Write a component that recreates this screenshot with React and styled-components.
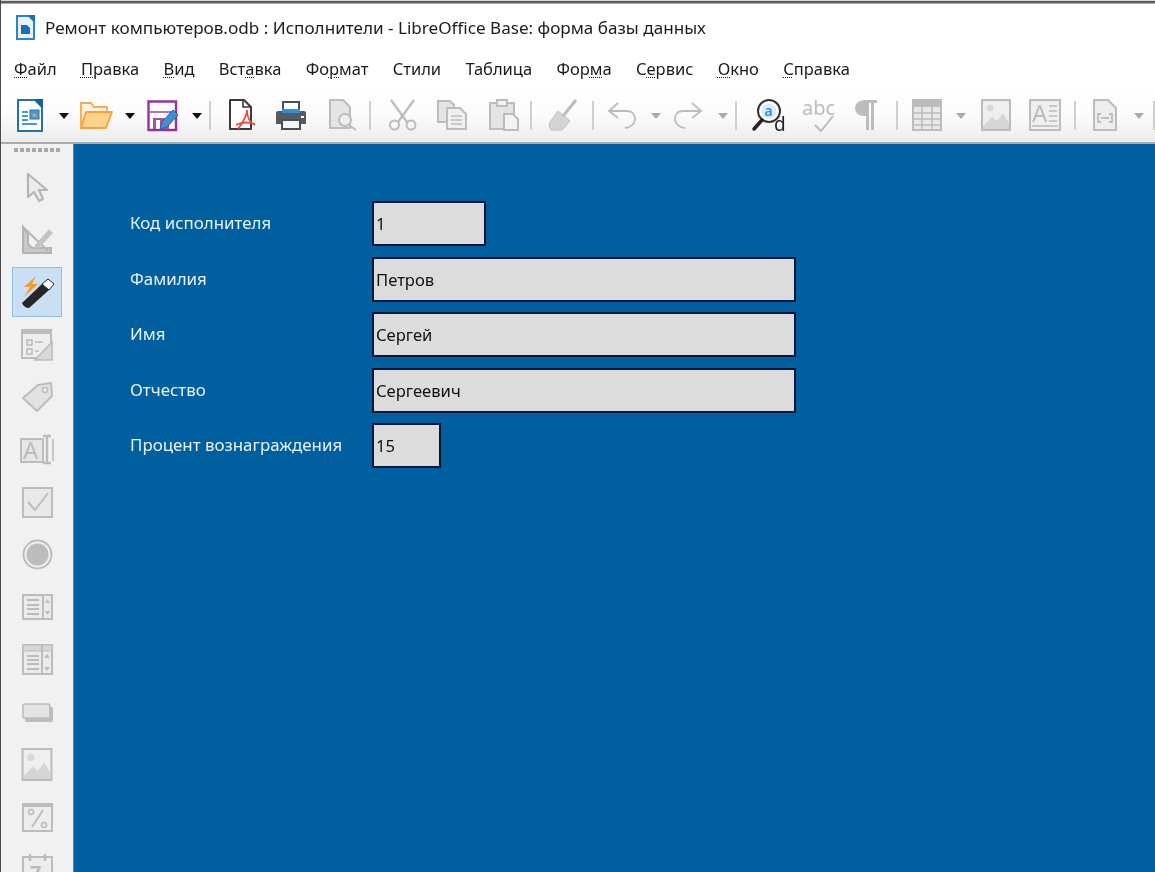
import React from "react";
import styled, { createGlobalStyle } from "styled-components";

const GlobalStyle = createGlobalStyle`
  html, body {
    margin: 0;
    padding: 0;
    background: #fff;
  }
  body {
    font-family: "Noto Sans", "Open Sans", sans-serif;
    color: #111;
  }
`;

// disabled icon colours
const GS = "#bcbcbc";
const GF = "#e4e4e4";

const Window = styled.div`
  width: 1155px;
  height: 872px;
  box-sizing: border-box;
  border-left: 1px solid #4a4a4a;
  display: flex;
  flex-direction: column;
  overflow: hidden;
  background: #fff;
  filter: blur(0.35px);
`;

const TopEdge = styled.div`
  height: 4px;
  flex: none;
  margin-left: -1px;
  background: linear-gradient(#d8d8d8 0, #d8d8d8 1px, #5c5c5c 1px, #5c5c5c 3px, #fff 4px);
`;

const TitleBar = styled.div`
  height: 46px;
  flex: none;
  display: flex;
  align-items: center;
  gap: 10px;
  padding-left: 15px;
  font-size: 17.1px;
  color: #1c1c1c;
  white-space: nowrap;
`;

const MenuBar = styled.div`
  height: 38px;
  flex: none;
  box-sizing: border-box;
  padding: 0 0 2px 13px;
  display: flex;
  align-items: center;
  gap: 24.3px;
  font-size: 16.5px;
  color: #1a1a1a;
  white-space: nowrap;
`;

const MenuItem = styled.span`
  display: block;
`;

const Key = styled.span`
  text-decoration: underline dotted 1px;
  text-underline-offset: 2px;
`;

const Toolbar = styled.div`
  height: 54px;
  flex: none;
  display: flex;
  align-items: center;
  background: linear-gradient(#ffffff 0%, #fbfbfb 50%, #ececec 100%);
  border-bottom: 2px solid #ababab;
  overflow: hidden;
`;

const Slot = styled.div`
  flex: none;
  margin-left: ${(p) => p.$ml}px;
  display: flex;
  align-items: center;
  svg {
    display: block;
    overflow: visible;
  }
`;

const Sep = styled.div`
  flex: none;
  width: 2px;
  height: 29px;
  margin-left: ${(p) => p.$ml}px;
  background: #cfcfcf;
`;

const Caret = styled.div`
  flex: none;
  width: 0;
  height: 0;
  margin-left: ${(p) => p.$ml}px;
  margin-top: 2px;
  border-left: ${(p) => (p.$off ? 5 : 5.5)}px solid transparent;
  border-right: ${(p) => (p.$off ? 5 : 5.5)}px solid transparent;
  border-top: 6px solid ${(p) => (p.$off ? "#aaa" : "#111")};
`;

const Main = styled.div`
  flex: 1;
  min-height: 0;
  display: flex;
`;

const Sidebar = styled.div`
  width: 72px;
  flex: none;
  background: #f1f1f1;
  display: flex;
  flex-direction: column;
  align-items: center;
  overflow: hidden;
`;

const Grip = styled.div`
  width: 47px;
  height: 4px;
  flex: none;
  margin: 4px 0 9px;
  background: repeating-linear-gradient(90deg, #a9a9a9 0, #a9a9a9 4px, transparent 4px, transparent 6px);
`;

const SideCell = styled.div`
  width: 100%;
  height: 52.5px;
  flex: none;
  display: flex;
  align-items: center;
  justify-content: center;
  svg {
    display: block;
    overflow: visible;
  }
`;

const ActiveCell = styled.div`
  width: 50px;
  height: 50px;
  box-sizing: border-box;
  background: #c9dff4;
  border: 1px solid #8fbfe8;
  display: flex;
  align-items: center;
  justify-content: center;
`;

const Canvas = styled.div`
  flex: 1;
  background: #00609f;
  border-left: 1px solid #2f93cf;
  padding: 57px 0 0 56px;
`;

const Form = styled.div`
  display: grid;
  grid-template-columns: 242px auto;
  grid-auto-rows: 45px;
  row-gap: 10.5px;
  align-items: center;
  justify-items: start;
`;

const Label = styled.div`
  font-size: 16.9px;
  padding-bottom: 2px;
  color: #e9f1f7;
  white-space: nowrap;
`;

const Field = styled.div`
  width: ${(p) => p.$w}px;
  height: 45px;
  box-sizing: border-box;
  background: #dcdcdc;
  border: 2px solid #06173a;
  padding-left: 2px;
  display: flex;
  align-items: center;
  font-size: 16.6px;
  color: #111;
`;

const BaseDocIcon = () => (
  <svg width="19" height="25" viewBox="0 0 19 25">
    <path d="M1 1H13L18 6V24H1Z" fill="#e8f2fa" stroke="#2b86c5" strokeWidth="2" />
    <path d="M12 0H19V7Z" fill="#1c6fb0" />
    <path d="M5 10H11L14 13V19H5Z" fill="#1670b8" />
  </svg>
);

const WriterIcon = () => (
  <svg width="26" height="33" viewBox="0 0 26 33">
    <path d="M1 1H18L25 8V32H1Z" fill="#fff" stroke="#2173b0" strokeWidth="2" />
    <path d="M17 0H26V9Z" fill="#1a5f99" />
    <path d="M5 13H11M5 17H11M5 21H11M5 25H20" stroke="#2173b0" strokeWidth="1.6" />
    <rect x="13" y="11" width="9" height="9" fill="#4a9ad2" stroke="#2173b0" />
    <path d="M15 17L17 14L20 18Z" fill="#f0a24a" />
  </svg>
);

const FolderIcon = () => (
  <svg width="34" height="30" viewBox="0 0 34 30">
    <path d="M2 27V3H12L15 7H28V12" fill="#fff3df" stroke="#f5a94c" strokeWidth="1.8" />
    <path d="M7 12H33L27 28H2Z" fill="#fdd28a" stroke="#f5a13c" strokeWidth="1.8" strokeLinejoin="round" />
  </svg>
);

const SaveIcon = () => (
  <svg width="31" height="31" viewBox="0 0 31 31">
    <path d="M1.5 1.5H29V30H1.5Z" fill="#fff" stroke="#98309c" strokeWidth="2.4" />
    <path d="M3 12H28" stroke="#98309c" strokeWidth="1.4" />
    <rect x="6" y="18" width="16" height="11" fill="#a551a8" />
    <rect x="9" y="20" width="4" height="9" fill="#fff" />
    <path d="M13 29L15 22L26 10L31 15L20 27Z" fill="#3d8fd0" stroke="#1d68a8" />
  </svg>
);

const PdfIcon = () => (
  <svg width="28" height="32" viewBox="0 0 28 32">
    <path d="M2 1H16L23 8V30H2Z" fill="#fff" stroke="#3a3a3a" strokeWidth="2" strokeLinejoin="round" />
    <path d="M15 1V8H23" fill="none" stroke="#3a3a3a" strokeWidth="1.6" />
    <path d="M19 11C19 17 13 26 10 30M19 11C19 18 22 24 27 26M8 26C14 23 21 23 27 25" fill="none" stroke="#ea4a3c" strokeWidth="1.8" />
  </svg>
);

const PrinterIcon = () => (
  <svg width="32" height="29" viewBox="0 0 32 29">
    <rect x="8" y="1" width="16" height="11" fill="#fff" stroke="#4a4f55" strokeWidth="2" />
    <path d="M1 12Q1 10 3 10H29Q31 10 31 12V23H1Z" fill="#565b62" />
    <path d="M7 8H25V12H7Z" fill="#2f8fd8" />
    <rect x="7" y="19" width="18" height="9" fill="#f4f4f4" stroke="#4a4f55" strokeWidth="2" />
    <rect x="26" y="15" width="3" height="2" fill="#fff" />
  </svg>
);

const PreviewIcon = () => (
  <svg width="30" height="32" viewBox="0 0 30 32">
    <path d="M2 1H15L22 8V29H2Z" fill={GF} stroke={GS} strokeWidth="2" />
    <circle cx="17" cy="21" r="6" fill="#efefef" stroke={GS} strokeWidth="2" />
    <path d="M21 26L28 31" stroke={GS} strokeWidth="2" />
  </svg>
);

const ScissorsIcon = () => (
  <svg width="30" height="32" viewBox="0 0 30 32">
    <path d="M3 1L19 23M26 1L10 23" stroke={GS} strokeWidth="2.2" fill="none" />
    <circle cx="6.5" cy="26" r="4.5" fill="none" stroke={GS} strokeWidth="2" />
    <circle cx="23" cy="26" r="4.5" fill="none" stroke={GS} strokeWidth="2" />
  </svg>
);

const CopyIcon = () => (
  <svg width="30" height="30" viewBox="0 0 30 30">
    <path d="M1 1H13L17 5V22H1Z" fill={GF} stroke={GS} strokeWidth="2" />
    <path d="M10 8H23L29 14V29H10Z" fill="#f0f0f0" stroke={GS} strokeWidth="2" />
    <path d="M14 16H25M14 20H25M14 24H25" stroke={GS} strokeWidth="1.6" />
  </svg>
);

const PasteIcon = () => (
  <svg width="30" height="32" viewBox="0 0 30 32">
    <rect x="1" y="4" width="24" height="26" fill={GF} stroke={GS} strokeWidth="2" />
    <rect x="8" y="1" width="10" height="6" fill="#f3f3f3" stroke={GS} strokeWidth="2" />
    <path d="M15 15H24L29 20V31H15Z" fill="#f3f3f3" stroke={GS} strokeWidth="2" />
  </svg>
);

const BrushIcon = () => (
  <svg width="30" height="32" viewBox="0 0 30 32">
    <path d="M28 1L15 17" stroke={GS} strokeWidth="3" />
    <path d="M10 12L22 22L14 31H3Q0 28 2 23Z" fill="#d4d4d4" stroke={GS} />
  </svg>
);

const UndoIcon = () => (
  <svg width="32" height="28" viewBox="0 0 32 28">
    <path d="M11 2L2 10L11 17M2 10H20C31 10 31 26 18 27" fill="none" stroke={GS} strokeWidth="1.8" />
  </svg>
);

const RedoIcon = () => (
  <svg width="32" height="28" viewBox="0 0 32 28">
    <path d="M21 2L30 10L21 17M30 10H12C1 10 1 26 14 27" fill="none" stroke={GS} strokeWidth="1.8" />
  </svg>
);

const IconText = styled.text`
  font-family: "Noto Sans", sans-serif;
`;

const FindIcon = () => (
  <svg width="36" height="34" viewBox="0 0 36 34">
    <circle cx="17" cy="13" r="11" fill="#fff" stroke="#333" strokeWidth="2" />
    <circle cx="17" cy="13" r="7.5" fill="#d8ecfa" />
    <IconText x="12.5" y="18" fontSize="14" fontWeight="600" fill="#2f93d6">a</IconText>
    <path d="M10 22L2 31" stroke="#222" strokeWidth="3.5" strokeLinecap="round" />
    <IconText x="22" y="33" fontSize="19" fill="#222">d</IconText>
  </svg>
);

const AbcIcon = () => (
  <svg width="34" height="34" viewBox="0 0 34 34">
    <IconText x="0" y="17" fontSize="20" fill={GS}>abc</IconText>
    <path d="M13 27L19 33L31 18" fill="none" stroke={GS} strokeWidth="2" />
  </svg>
);

const PilcrowIcon = () => (
  <svg width="24" height="32" viewBox="0 0 24 32">
    <path d="M11 1H23V4H20V31H17V4H15V31H12V17H10C-2 17 -2 1 11 1Z" fill={GS} />
  </svg>
);

const TableIcon = () => (
  <svg width="30" height="32" viewBox="0 0 30 32">
    <rect x="1" y="1" width="28" height="30" fill="#e9e9e9" stroke={GS} strokeWidth="2" />
    <rect x="1" y="1" width="28" height="7" fill={GS} />
    <path d="M1 14H29M1 20H29M1 26H29M10 8V31M20 8V31" stroke={GS} strokeWidth="1.6" />
  </svg>
);

const ImageIcon = ({ w = 30, h = 32 }) => (
  <svg width={w} height={h} viewBox="0 0 30 32">
    <rect x="1" y="1" width="28" height="30" fill="#efefef" stroke={GS} strokeWidth="2" />
    <circle cx="9" cy="9" r="3.5" fill="#d8d8d8" />
    <path d="M2 27L11 18L16 22L22 14L28 24V30H2Z" fill="#d5d5d5" />
  </svg>
);

const TextBoxIcon = () => (
  <svg width="32" height="32" viewBox="0 0 32 32">
    <rect x="1" y="1" width="30" height="30" fill="#efefef" stroke={GS} strokeWidth="2" />
    <IconText x="3" y="23" fontSize="24" fill={GS}>A</IconText>
    <path d="M20 7H28M20 12H28M20 17H28M20 22H28M3 27H29" stroke={GS} strokeWidth="1.6" />
  </svg>
);

const FieldDocIcon = () => (
  <svg width="24" height="32" viewBox="0 0 24 32">
    <path d="M1 1H15L23 9V31H1Z" fill="#eee" stroke={GS} strokeWidth="2" />
    <path d="M8 15H5V23H8M16 15H19V23H16M8 19H16" fill="none" stroke={GS} strokeWidth="1.8" />
  </svg>
);

const CursorIcon = () => (
  <svg width="23" height="31" viewBox="0 0 23 31">
    <path d="M2 2V25L8 20L13 29L17 27L13 18H21Z" fill="#ececec" stroke="#b4b4b4" strokeWidth="2.2" strokeLinejoin="round" />
  </svg>
);

const DesignIcon = () => (
  <svg width="32" height="30" viewBox="0 0 32 30">
    <path d="M2 2V28H30V23H11L7 19V9Z" fill="#c9c9c9" stroke="#b4b4b4" strokeWidth="2" />
    <path d="M2 2L27 26" stroke="#b4b4b4" strokeWidth="2" />
    <path d="M14 20L28 4L32 8L18 23L13 24Z" fill="#c4c4c4" />
  </svg>
);

const WandIcon = () => (
  <svg width="33" height="33" viewBox="0 0 33 33">
    <path d="M15 0L3 11H9L3 21L17 8H11Z" fill="#f39a2e" />
    <path d="M1 27L21 8L28 14L8 32Q3 32 1 27Z" fill="#262626" />
    <path d="M21 8L27 3L33 8L28 14Z" fill="#fff" stroke="#262626" />
  </svg>
);

const FormPropsIcon = () => (
  <svg width="32" height="32" viewBox="0 0 32 32">
    <rect x="1" y="1" width="29" height="28" fill="#eee" stroke={GS} strokeWidth="2" />
    <rect x="1" y="1" width="29" height="4" fill={GS} />
    <rect x="6" y="11" width="5" height="5" fill="none" stroke={GS} strokeWidth="1.6" />
    <rect x="6" y="20" width="5" height="5" fill="none" stroke={GS} strokeWidth="1.6" />
    <path d="M14 13H22M14 22H18" stroke={GS} strokeWidth="1.6" />
    <path d="M14 31L31 13V31Z" fill="#d8d8d8" stroke={GS} strokeWidth="1.6" />
  </svg>
);

const TagIcon = () => (
  <svg width="31" height="30" viewBox="0 0 31 30">
    <path d="M1 16L16 3L29 1L30 14L15 29Z" fill="#e2e2e2" stroke={GS} strokeWidth="2" strokeLinejoin="round" />
    <circle cx="23" cy="8" r="2.5" fill="#f1f1f1" stroke={GS} strokeWidth="1.5" />
  </svg>
);

const LabelIcon = () => (
  <svg width="34" height="29" viewBox="0 0 34 29">
    <rect x="1" y="4" width="22" height="23" fill="#e6e6e6" stroke={GS} strokeWidth="2" />
    <IconText x="3" y="24" fontSize="24" fill={GS}>A</IconText>
    <path d="M23 1H31M23 28H31M27 1V28" stroke={GS} strokeWidth="2.4" />
    <path d="M33 4V26" stroke={GS} strokeWidth="1.6" />
  </svg>
);

const CheckIcon = () => (
  <svg width="31" height="31" viewBox="0 0 31 31">
    <rect x="1" y="1" width="29" height="29" fill="#e9e9e9" stroke={GS} strokeWidth="2" />
    <path d="M6 15L13 23L26 6" fill="none" stroke={GS} strokeWidth="2" />
  </svg>
);

const RadioIcon = () => (
  <svg width="31" height="31" viewBox="0 0 31 31">
    <circle cx="15.5" cy="15.5" r="14" fill="#efefef" stroke={GS} strokeWidth="2" />
    <circle cx="15.5" cy="15.5" r="11" fill={GS} />
  </svg>
);

const ListIcon = () => (
  <svg width="31" height="26" viewBox="0 0 31 26">
    <rect x="1" y="1" width="29" height="24" fill="#ebebeb" stroke={GS} strokeWidth="2" />
    <path d="M5 6H17M5 11H17M5 15H17M5 20H17" stroke={GS} strokeWidth="1.8" />
    <path d="M21 1V25" stroke={GS} strokeWidth="2" />
    <path d="M23 9L25.5 5L28 9ZM23 17L25.5 21L28 17Z" fill={GS} />
  </svg>
);

const ComboIcon = () => (
  <svg width="31" height="31" viewBox="0 0 31 31">
    <rect x="1" y="1" width="29" height="29" fill="#ebebeb" stroke={GS} strokeWidth="2" />
    <rect x="1" y="1" width="29" height="6" fill="#d6d6d6" stroke={GS} />
    <path d="M5 12H17M5 16H17M5 20H17M5 25H17" stroke={GS} strokeWidth="1.8" />
    <path d="M20 1V30" stroke={GS} strokeWidth="2" />
    <path d="M22 14L25 10L28 14ZM22 23L25 27L28 23Z" fill={GS} />
  </svg>
);

const PushButtonIcon = () => (
  <svg width="31" height="19" viewBox="0 0 31 19">
    <rect x="3" y="4" width="28" height="15" rx="2" fill={GS} />
    <rect x="1" y="1" width="27" height="14" rx="2" fill="#e4e4e4" stroke={GS} strokeWidth="1.6" />
  </svg>
);

const PercentIcon = () => (
  <svg width="31" height="29" viewBox="0 0 31 29">
    <rect x="1" y="1" width="29" height="27" fill="#ededed" stroke={GS} strokeWidth="2" />
    <rect x="1" y="1" width="29" height="3" fill={GS} />
    <circle cx="9" cy="9" r="2.5" fill="none" stroke={GS} strokeWidth="1.6" />
    <circle cx="22" cy="22" r="2.5" fill="none" stroke={GS} strokeWidth="1.6" />
    <path d="M21 7L10 24" stroke={GS} strokeWidth="2" />
  </svg>
);

const CalendarIcon = () => (
  <svg width="31" height="31" viewBox="0 0 31 31">
    <rect x="1" y="3" width="29" height="27" fill="#ededed" stroke={GS} strokeWidth="2" />
    <path d="M8 0V7M23 0V7" stroke={GS} strokeWidth="2.4" />
    <IconText x="8" y="26" fontSize="20" fontWeight="700" fill={GS}>7</IconText>
  </svg>
);

const menu = [
  ["", "Ф", "айл"],
  ["", "П", "равка"],
  ["", "В", "ид"],
  ["Вст", "а", "вка"],
  ["Фо", "р", "мат"],
  ["Стили", "", ""],
  ["Таблица", "", ""],
  ["Фор", "м", "а"],
  ["С", "е", "рвис"],
  ["", "О", "кно"],
  ["", "С", "правка"],
];

const sideIcons = [
  <CursorIcon />,
  <DesignIcon />,
  <ActiveCell><WandIcon /></ActiveCell>,
  <FormPropsIcon />,
  <TagIcon />,
  <LabelIcon />,
  <CheckIcon />,
  <RadioIcon />,
  <ListIcon />,
  <ComboIcon />,
  <PushButtonIcon />,
  <ImageIcon w={32} h={33} />,
  <PercentIcon />,
  <CalendarIcon />,
];

const rows = [
  { label: "Код исполнителя", value: "1", w: 114 },
  { label: "Фамилия", value: "Петров", w: 424 },
  { label: "Имя", value: "Сергей", w: 424 },
  { label: "Отчество", value: "Сергеевич", w: 424 },
  { label: "Процент вознаграждения", value: "15", w: 69 },
];

const App = () => {
  return (
    <Window>
      <GlobalStyle />
      <TopEdge />
      <TitleBar>
        <BaseDocIcon />
        <span>Ремонт компьютеров.odb : Исполнители - LibreOffice Base: форма базы данных</span>
      </TitleBar>
      <MenuBar>
        {menu.map(([a, k, b]) => (
          <MenuItem key={a + k + b}>
            {a}
            {k && <Key>{k}</Key>}
            {b}
          </MenuItem>
        ))}
      </MenuBar>
      <Toolbar>
        <Slot $ml={16}><WriterIcon /></Slot>
        <Caret $ml={16} />
        <Slot $ml={10}><FolderIcon /></Slot>
        <Caret $ml={12} />
        <Slot $ml={12}><SaveIcon /></Slot>
        <Caret $ml={14} />
        <Sep $ml={7} />
        <Slot $ml={17}><PdfIcon /></Slot>
        <Slot $ml={19}><PrinterIcon /></Slot>
        <Slot $ml={21}><PreviewIcon /></Slot>
        <Sep $ml={11} />
        <Slot $ml={17}><ScissorsIcon /></Slot>
        <Slot $ml={19}><CopyIcon /></Slot>
        <Slot $ml={22}><PasteIcon /></Slot>
        <Sep $ml={11} />
        <Slot $ml={16}><BrushIcon /></Slot>
        <Sep $ml={14} />
        <Slot $ml={13}><UndoIcon /></Slot>
        <Caret $off $ml={12} />
        <Slot $ml={10}><RedoIcon /></Slot>
        <Caret $off $ml={15} />
        <Sep $ml={7} />
        <Slot $ml={15}><FindIcon /></Slot>
        <Slot $ml={14}><AbcIcon /></Slot>
        <Slot $ml={18}><PilcrowIcon /></Slot>
        <Sep $ml={18} />
        <Slot $ml={14}><TableIcon /></Slot>
        <Caret $off $ml={14} />
        <Slot $ml={15}><ImageIcon /></Slot>
        <Slot $ml={18}><TextBoxIcon /></Slot>
        <Sep $ml={13} />
        <Slot $ml={17}><FieldDocIcon /></Slot>
        <Caret $off $ml={17} />
        <Sep $ml={9} />
      </Toolbar>
      <Main>
        <Sidebar>
          <Grip />
          {sideIcons.map((icon, i) => (
            <SideCell key={i}>{icon}</SideCell>
          ))}
        </Sidebar>
        <Canvas>
          <Form>
            {rows.map((r) => (
              <React.Fragment key={r.label}>
                <Label>{r.label}</Label>
                <Field $w={r.w}>{r.value}</Field>
              </React.Fragment>
            ))}
          </Form>
        </Canvas>
      </Main>
    </Window>
  );
};

export default App;
